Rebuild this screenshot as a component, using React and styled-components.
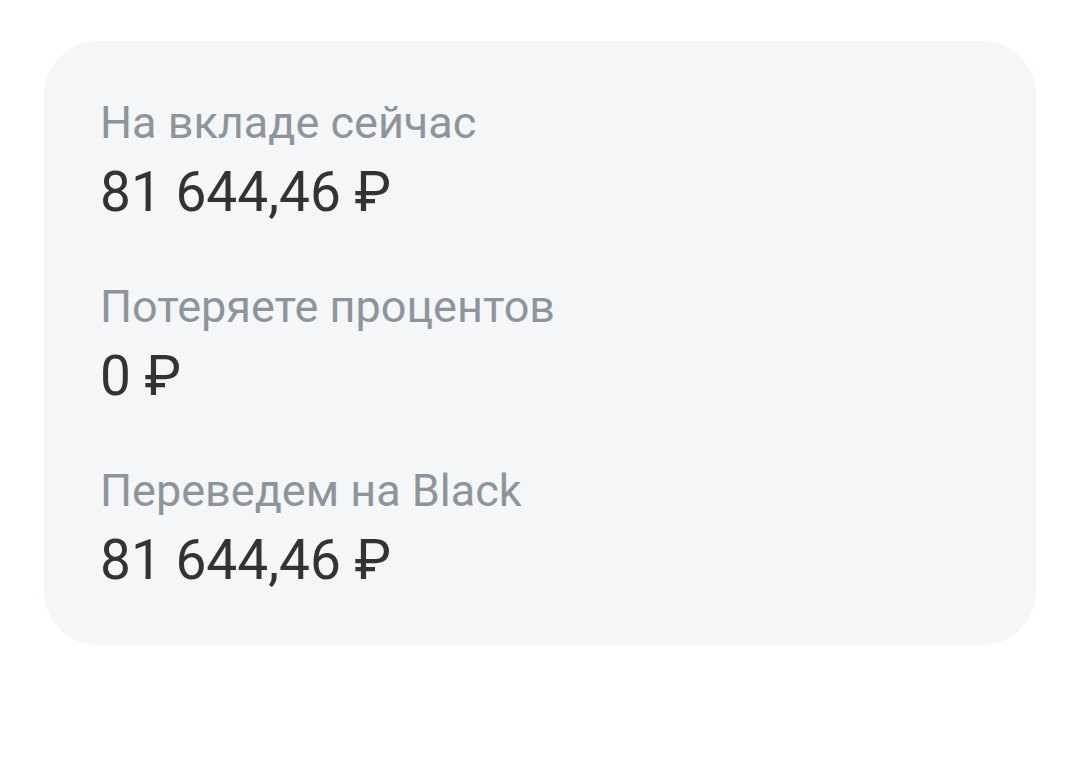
import styled, { createGlobalStyle } from "styled-components"

const GlobalStyle = createGlobalStyle`
    body {
        margin: 0;
        background: #ffffff;
        font-family: Roboto, "Noto Sans", sans-serif;
    }
`

const Page = styled.div`
    padding: 41px 44px 0 44px;
    width: 1080px;
    box-sizing: border-box;
`

const Card = styled.div`
    background: #f5f6f8;
    border-radius: 54px;
    padding: 56px 56px 52px 56px;
    display: flex;
    flex-direction: column;
    gap: 56px;
`

const Row = styled.div`
    display: flex;
    flex-direction: column;
`

const Label = styled.span`
    font-size: 45px;
    line-height: 52px;
    color: #8e949c;
`

const Value = styled.span`
    margin-top: 10px;
    font-size: 55px;
    line-height: 66px;
    color: #333333;
`

const rows = [
    { label: "На вкладе сейчас", value: "81 644,46 ₽" },
    { label: "Потеряете процентов", value: "0 ₽" },
    { label: "Переведем на Black", value: "81 644,46 ₽" },
]

const App = () => {
    return (
        <Page>
            <GlobalStyle />
            <Card>
                {rows.map((r) => (
                    <Row key={r.label}>
                        <Label>{r.label}</Label>
                        <Value>{r.value}</Value>
                    </Row>
                ))}
            </Card>
        </Page>
    )
}

export default App
